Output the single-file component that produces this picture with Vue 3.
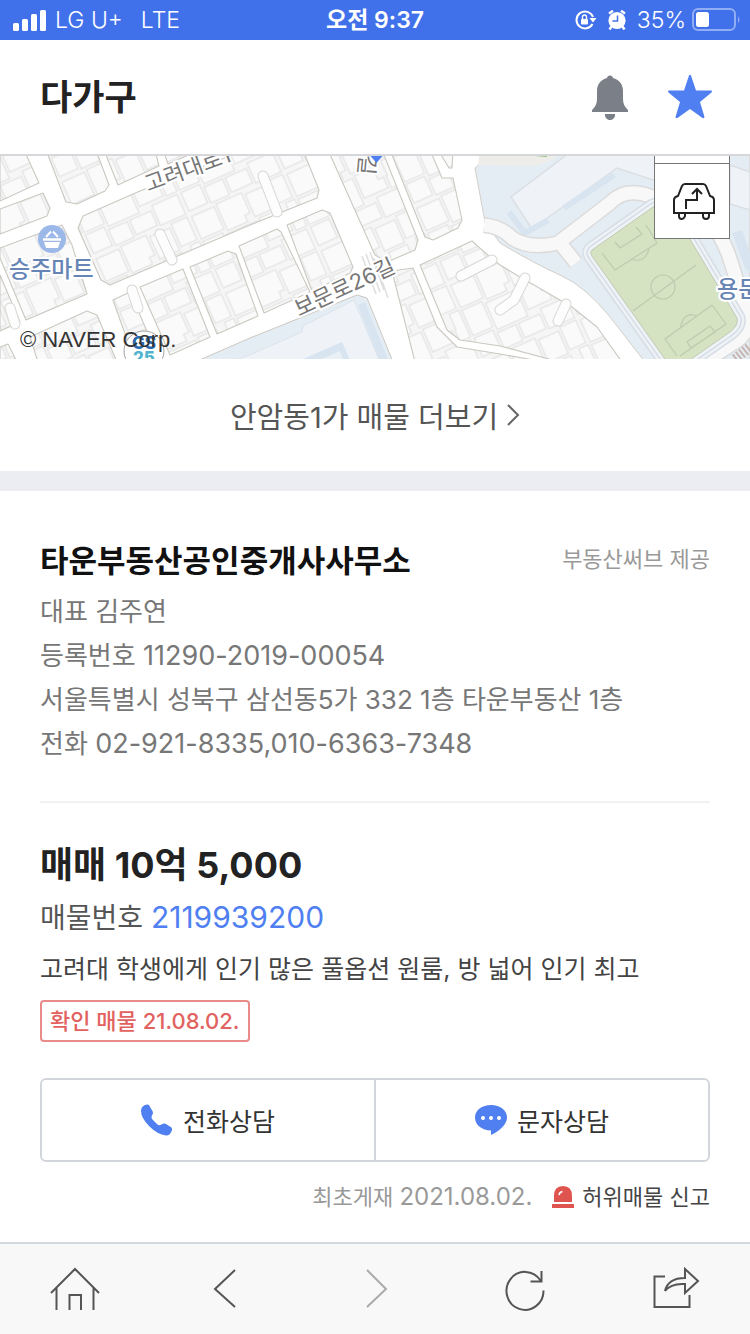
<script setup>
const blocks = [
  '0,150 24,150 39,183 0,201',
  '0,209 43,193 50,208 47,216 0,234',
  '46,150 96,150 109,185 105,191 77,204 66,202',
  '104,150 155,150 159,166 118,185',
  '163,150 200,150 168,164',
  '78,228 83,216 140,191 245,150 303,150 319,190 317,198 250,225 110,285 101,280',
  '0,248 62,225 72,245 87,294 26,320 0,258',
  '0,275 20,322 0,331',
  '30,337 87,311 97,315 117,362 38,362',
  '0,347 8,344 17,362 0,362',
  '113,300 130,292 137,308 160,362 135,362',
  '140,287 183,269 210,337 170,355',
  '190,267 228,251 236,254 258,316 217,334',
  '239,246 277,229 281,232 310,292 264,313',
  '287,225 322,210 330,213 353,267 350,273 312,291',
  '328,150 382,150 418,240 415,250 387,262 375,255',
  '390,150 430,150 442,178 453,178 462,220 458,228 433,240 425,237',
  '438,150 453,150 452,168 449,168',
  '420,265 472,241 490,257 500,265 525,280 534,285 572,307 597,327 622,362 560,362 500,346 460,340 447,330',
  '392,271 413,268 437,327 457,347 500,354 545,362 415,362',
]
const lanes = ['M160 234L172 260', 'M263 176L277 212', 'M132 290L138 308', 'M461 276L492 260', 'M525 278L514 300L500 310', 'M566 304L558 321', 'M10 308L15 324']
const driveway = 'M484 225Q502 227 512 238Q530 250 558 243L610 203Q625 187 650 196L706 220Q722 233 731 262L748 317Q751 330 738 340L700 365M560 243L576 263'
const field = 'M592 250L653 207Q669 199 681 224L737 318Q739 325 730 332L687 362H667L594 259Q589 253 592 250Z'
const tracks = [
  { color: '#d6dde5', width: 17 },
  { color: '#edf2f7', width: 14 },
  { color: '#d6dde5', width: 9 },
  { color: '#eef3f7', width: 6 },
  { color: '#bfcab5', width: 1 },
]
</script>

<template>
  <div class="page">
    <div class="status">
      <div class="side">
        <svg width="34" height="22" viewBox="0 0 34 22" fill="#fff" aria-hidden="true">
          <rect x="0" y="14" width="6" height="8" rx="1.5" /><rect x="9" y="10" width="6" height="12" rx="1.5" /><rect x="18" y="5" width="6" height="17" rx="1.5" /><rect x="27" y="1" width="6" height="21" rx="1.5" />
        </svg>
        <span>LG U+</span><span class="lte">LTE</span>
      </div>
      <strong class="clock">오전 9:37</strong>
      <div class="side right">
        <svg width="22" height="20" viewBox="0 0 22 20" aria-hidden="true">
          <path d="M17.5 14A8.5 8.500 0 1 1 18 7" fill="none" stroke="#fff" stroke-width="2" /><path d="M14.500 8H21.500L18 12.500Z" fill="#fff" />
          <rect x="6" y="9" width="7" height="5.500" rx="1" fill="#fff" /><path d="M7.500 9V7a2 2 0 0 1 4 0V9" fill="none" stroke="#fff" stroke-width="1.400" />
        </svg>
        <svg class="alarm" width="18" height="20" viewBox="0 0 18 20" aria-hidden="true">
          <circle cx="9" cy="10.500" r="8.600" fill="#fff" /><path d="M1 3.500L5 .8M17 3.500L13 .8M3.500 16.500L1.500 19.500M14.500 16.500L16.500 19.500" stroke="#fff" stroke-width="2.500" />
          <path d="M9.500 5.500V11H4.500" fill="none" stroke="#4171ea" stroke-width="1.500" />
        </svg>
        <span>35%</span>
        <svg class="battery" width="48" height="24" viewBox="0 0 48 24" aria-hidden="true">
          <rect x="1" y="1" width="42" height="21" rx="5" fill="none" stroke="#91aef5" stroke-width="2" /><path d="M46 8.500q3 3 0 6.500z" fill="#91aef5" />
          <rect x="4" y="4" width="13" height="15" rx="2.500" fill="#fff" />
        </svg>
      </div>
    </div>

    <header class="header">
      <h1>다가구</h1>
      <button class="icon-btn" aria-label="알림">
        <svg width="38" height="48" viewBox="0 -2 38 48" fill="#7b7f87" aria-hidden="true">
          <path d="M19 0.500c1.700 0 2.700 1 3 2.500C28 4.500 32 9 32 16v8c0 5 2 8 4.500 10.500.6.700.6 1.500.5 2.500H1c-.1-1-.1-1.800.5-2.500C4 32 6 29 6 24v-8C6 9 10 4.500 16 3c.3-1.500 1.300-2.500 3-2.500z" /><path d="M14 39h10c.4 3.500-2 6-5 6s-5.400-2.500-5-6z" />
        </svg>
      </button>
      <button class="icon-btn" aria-label="관심 매물">
        <svg width="46" height="46" viewBox="0 0 46 46" fill="#4f7ff0" aria-hidden="true">
          <path d="M22 1.500Q23 0 24 1.500L29 16.500H44.500Q45.500 17.700 44.500 18.500L33 28L37.500 43Q37.300 44.500 35.500 44L23 35L10.500 44Q8.700 44.500 8.500 43L13 28L1.500 18.500Q.5 17.700 1.500 16.500H17Z" />
        </svg>
      </button>
    </header>

    <main>
      <div class="map">
        <svg class="map-art" viewBox="0 156 750 203" preserveAspectRatio="xMidYMid slice" role="img" aria-label="매물 위치 지도">
          <defs>
            <pattern id="lots" width="72" height="58" patternUnits="userSpaceOnUse" patternTransform="rotate(-24 110 280) scale(1.45)">
              <rect width="72" height="58" fill="#f6f6f6" />
              <g fill="#fafafa" stroke="#e6e6e6">
                <path d="M1 2H18V19H1zM20 1H39V16H35V21H20zM41 3H56V20H41zM58 1H70V18H58z" />
                <path d="M1 21H16V40H1zM18 23H41V43H18zM43 22H57V31H61V39H43zM64 20H71V40H63V31H64z" />
                <path d="M1 42H15V56H1zM17 45H31V57H17zM33 45H49V56H33zM51 42H70V57H51z" />
              </g>
            </pattern>
          </defs>
          <rect y="150" width="750" height="212" fill="#fff" />
          <path d="M480 150L480 164L475 168L485 222L500 243Q535 264 560 275T610 317L645 362H750V150Z" fill="#e5edf4" stroke="#d2cfc9" />
          <path d="M480 150H565Q548 165 532 166L478 165Z" fill="#efedea" />
          <path d="M522 155q12-4 24-1l1 3z" fill="#8fc06f" />
          <path d="M573 150L511 197L532 229L617 168L656 181V150ZM730 165L750 172V210L730 204Z" fill="#eff3f8" stroke="#dbdfe3" stroke-width="1.500" />
          <path d="M509 212L525 233L548 220M564 208L614 175" fill="none" stroke="#d8e4f0" stroke-width="6" />
          <path d="M732 233L742 230L750 252V273L745 268Z" fill="#d8e4f0" />
          <g fill="none" stroke-linejoin="round">
            <path :d="driveway" stroke="#dbdbdb" stroke-width="16" />
            <path :d="driveway" stroke="#f8f8f8" stroke-width="13" />
          </g>
          <path v-for="track in tracks" :key="track.width" :d="field" fill="#d5e3c2" :stroke="track.color" :stroke-width="track.width" stroke-linejoin="round" />
          <g fill="none" stroke="#bdcbb0" stroke-width="1.200">
            <circle cx="663" cy="287" r="12" /><path d="M633 311L696 265M602 253L615 270L657 243L646 225M615 242L620 248L642 234L636 227M631 259Q645 264 649 249M712 305L726 324L680 356M712 305L665 339L677 356M710 326L715 332L691 348L687 342L710 326M680 329Q684 310 697 316" />
          </g>
          <path d="M735 359L750 347" stroke="#c7b5b0" stroke-width="10" stroke-dasharray="2 2" />
          <polygon v-for="points in blocks" :key="points" :points="points" fill="url(#lots)" stroke="#cbc8c1" stroke-width="1.100" stroke-linejoin="round" />
          <g fill="none" stroke-linecap="round" stroke-linejoin="round">
            <path v-for="lane in lanes" :key="lane" :d="lane" stroke="#d9d7d3" stroke-width="11" />
            <path v-for="lane in lanes" :key="lane + 'fill'" :d="lane" stroke="#fdfdfd" stroke-width="9" />
          </g>
          <path d="M195 362L250 338L357 295L367 298L393 362Z" fill="#e5edf4" stroke="#cbc8c1" />
          <path d="M231 362L252 354L302 332L303 326L354 300L380 362Z" fill="#eff3f8" stroke="#dce3ea" />
          <path d="M296 362L342 342L351 362Z" fill="#d8e4f0" /><path d="M315 362L340 351L344 362Z" fill="#e9f0f6" />
          <path d="M358 305L365 302L389 362H380Z" fill="#d8e4f0" />
          <path d="M362 256L376 294M366 254L380 292M370 252L384 290M374 258L388 298" stroke="#dedede" stroke-width="1.500" />
          <g class="road-label">
            <text transform="translate(148 192) rotate(-20)">고려대로1</text>
            <text transform="translate(299 317) rotate(-25)">보문로26길</text>
            <text transform="translate(360 154) rotate(95)">길</text>
          </g>
          <path d="M368 153H385L376.500 163Z" fill="#4f7ff0" />
          <circle cx="52" cy="239" r="14" fill="#9bb8e8" />
          <path d="M43 239.500H61" fill="none" stroke="#fff" stroke-width="2.500" />
          <path d="M44 242H60L58 248H46Z" fill="#fff" />
          <path d="M46 237L51 231.500M58 237L53 231.500" fill="none" stroke="#fff" stroke-width="2" />
          <g class="place"><text x="9" y="277">승주마트</text><text x="717" y="297">용문</text></g>
          <circle cx="144" cy="351" r="20" fill="#fff" stroke="#a6a6a6" />
          <text x="132" y="349" class="gs">GS</text><text x="133" y="364" class="gs cyan">25</text>
        </svg>
        <small class="copyright">© NAVER Corp.</small>
        <div class="map-tools">
          <button aria-label="길찾기">
            <svg width="44" height="38" viewBox="0 0 44 38" fill="none" stroke="#222" stroke-width="2" aria-hidden="true">
              <path d="M2 31V18Q2 15 6 14L10 4Q11 2 13 2H31Q33 2 34 4L38 14Q42 15 42 18V31ZM7 31V34Q7 37 9.500 37T13 34V31M31 31V34Q31 37 34 37T37 34V31" />
              <path d="M14 27V18H25V7M20 12L25 7L30 12" />
            </svg>
          </button>
        </div>
      </div>

      <a class="more" href="#more">안암동1가 매물 더보기
        <svg width="14" height="24" viewBox="0 0 14 24" fill="none" stroke="#666" stroke-width="2" aria-hidden="true"><path d="M2 2L12 12L2 22" /></svg>
      </a>

      <section class="agency">
        <div class="agency-head"><h2>타운부동산공인중개사사무소</h2><span class="provider">부동산써브 제공</span></div>
        <p>대표 김주연</p>
        <p>등록번호 <span class="digits">11290-2019-00054</span></p>
        <p>서울특별시 성북구 삼선동5가 332 1층 타운부동산 1층</p>
        <p>전화 <span class="digits">02-921-8335,010-6363-7348</span></p>
      </section>

      <section class="listing">
        <h2>매매 10억 5,000</h2>
        <p class="number">매물번호 <a href="#listing">2119939200</a></p>
        <p class="summary">고려대 학생에게 인기 많은 풀옵션 원룸, 방 넓어 인기 최고</p>
        <span class="badge">확인 매물 21.08.02.</span>
        <div class="contact">
          <button>
            <svg width="32" height="32" viewBox="0 0 32 32" fill="#4f7ff0" aria-hidden="true"><path d="M0 7Q0 1.500 6 .5Q7.500 .2 8.200 1.500L11.700 7.500Q12.400 9 11.500 10.500Q9.500 13.500 11.500 15.500L16.500 20.500Q18 22 20.500 20.500Q23 19 25 20L30.500 23.500Q31.500 24.500 31 26Q29.500 31.500 25 31.500Q16.500 30.500 8.500 22.500Q0 14 0 7Z" /></svg>
            전화상담
          </button>
          <button>
            <svg width="32" height="32" viewBox="0 0 32 32" aria-hidden="true"><path d="M16 1C25 1 32 6 32 13.500C32 21 24 27 16 31V26.500C7 26.500 0 21 0 13.500C0 6 7 1 16 1Z" fill="#4f7ff0" /><g fill="#fff"><circle cx="8" cy="14" r="2" /><circle cx="16" cy="14" r="2" /><circle cx="24" cy="14" r="2" /></g></svg>
            문자상담
          </button>
        </div>
        <div class="meta">
          <span>최초게재 <span class="date">2021.08.02.</span></span>
          <a href="#report">
            <svg width="22" height="22" viewBox="0 0 22 22" aria-hidden="true"><path d="M2 16V10Q2 0 11 0T20 10V16ZM0 18H22V22H0Z" fill="#e05450" /><path d="M7 9Q7.500 6 10.500 5.500" fill="none" stroke="#fff" stroke-width="1.600" /></svg>
            허위매물 신고
          </a>
        </div>
      </section>
    </main>

    <nav class="toolbar">
      <button aria-label="홈"><svg width="50" height="44" viewBox="0 0 50 44"><path d="M1 26L25 2L49 26M6.500 21V43M43.500 21V43M19.500 43V28H31V43" /></svg></button>
      <button aria-label="뒤로"><svg width="50" height="44" viewBox="0 0 50 44"><path d="M35 3L15 22L35 40" /></svg></button>
      <button aria-label="앞으로" class="off"><svg width="50" height="44" viewBox="0 0 50 44"><path d="M17 3L36 22L17 40" /></svg></button>
      <button aria-label="새로고침"><svg width="50" height="44" viewBox="0 0 50 44"><path d="M43.500 23.500A18.500 19 0 1 1 40.500 13.500M41.500 4V14.500H30.500" /></svg></button>
      <button aria-label="공유"><svg width="50" height="44" viewBox="0 0 50 44"><path d="M15 9.500H4.500V40H39.500V28M15 24Q18 11 35 11V2L48 14L35 26V17Q21 16 15 24Z" /></svg></button>
    </nav>
  </div>
</template>

<style>
body { margin: 0; background: #fff; }
</style>

<style scoped>
.page { min-height: 100vh; display: flex; flex-direction: column; font-family: Inter, "Noto Sans CJK KR", sans-serif; color: #222; background: #fff; }
h1, h2, p { margin: 0; }
button { font: inherit; color: inherit; background: none; border: 0; padding: 0; }
a { text-decoration: none; color: inherit; }
svg { display: block; flex: none; }
main { flex: 1; }
.status { height: 40px; display: grid; grid-template-columns: 1fr auto 1fr; align-items: center; background: #4171ea; color: #fff; font-size: 23px; line-height: 40px; font-weight: 300; }
.side { display: flex; align-items: center; gap: 8px; padding-left: 13px; }
.side.right { justify-content: flex-end; padding: 0 10px 0 0; }
.lte { margin-left: 10px; }
.alarm { margin: 0 3px; }
.battery { margin-left: -2px; }
.clock { font-size: 23px; font-weight: 600; }
.header { height: 114px; display: flex; align-items: center; gap: 38px; padding: 0 37px 0 40px; border-bottom: 2px solid #d6d7db; }
h1 { flex: 1; font-size: 35px; line-height: 50px; font-weight: 600; }
.map { position: relative; height: 203px; overflow: hidden; }
.map-art { width: 100%; height: 100%; }
.road-label { font-size: 22px; fill: #777; stroke: #fff; stroke-width: 4px; paint-order: stroke; }
.place { font-size: 23px; font-weight: 500; fill: #6685b5; stroke: #fff; stroke-width: 4px; paint-order: stroke; }
.gs { font-size: 17px; font-weight: 800; fill: #286ab0; }
.cyan { fill: #50b4cc; }
.copyright { position: absolute; left: 20px; bottom: 3px; font: 22px/32px "Liberation Sans", Arial, sans-serif; color: #333; }
.map-tools { position: absolute; right: 20px; top: 0; width: 74px; padding-top: 7px; border: 1px solid #777; border-top: 0; background: #fff; }
.map-tools button { width: 100%; height: 75px; padding-left: 3px; display: grid; place-items: center; border-top: 1px solid #777; }
.more { height: 112px; display: flex; align-items: center; justify-content: center; gap: 8px; font-size: 29px; color: #555; border-bottom: 20px solid #ecedf2; }
.agency { margin: 0 40px; padding: 48px 0 35px; border-bottom: 2px solid #f1f2f4; font-size: 26px; line-height: 44px; color: #777; }
.agency-head { display: flex; justify-content: space-between; margin-bottom: 7px; }
.agency h2 { font-size: 31px; font-weight: 700; color: #111; }
.provider { font-size: 22px; line-height: 40px; color: #999; }
.digits { font-size: 27px; }
.listing { padding: 36px 40px 28px; }
.listing h2 { font-size: 36px; line-height: 52px; font-weight: 700; }
.number { font-size: 28px; line-height: 52px; color: #555; }
.number a { color: #4f7ff0; font-size: 30px; }
.summary { font-size: 25px; line-height: 50px; color: #444; }
.badge { display: inline-block; margin-top: 6px; padding: 0 8px; border: 2px solid #e98c89; border-radius: 4px; font-size: 22px; line-height: 38px; font-weight: 500; color: #e2625f; }
.contact { display: flex; margin-top: 36px; border: 2px solid #d3d5dd; border-radius: 6px; }
.contact button { flex: 1; height: 80px; display: flex; align-items: center; justify-content: center; gap: 10px; font-size: 25px; color: #333; }
.contact button + button { border-left: 2px solid #d3d5dd; }
.meta { display: flex; justify-content: flex-end; gap: 20px; margin-top: 18px; font-size: 22px; line-height: 34px; color: #999; }
.date { font-size: 24px; }
.meta a { display: flex; align-items: center; gap: 8px; color: #444; }
.toolbar { height: 90px; display: flex; border-top: 2px solid #d3d8df; background: #f8f8f8; }
.toolbar button { flex: 1; display: grid; place-items: center; }
.toolbar path { fill: none; stroke: #555; stroke-width: 2px; }
.toolbar .off path { stroke: #aaa; }
</style>
